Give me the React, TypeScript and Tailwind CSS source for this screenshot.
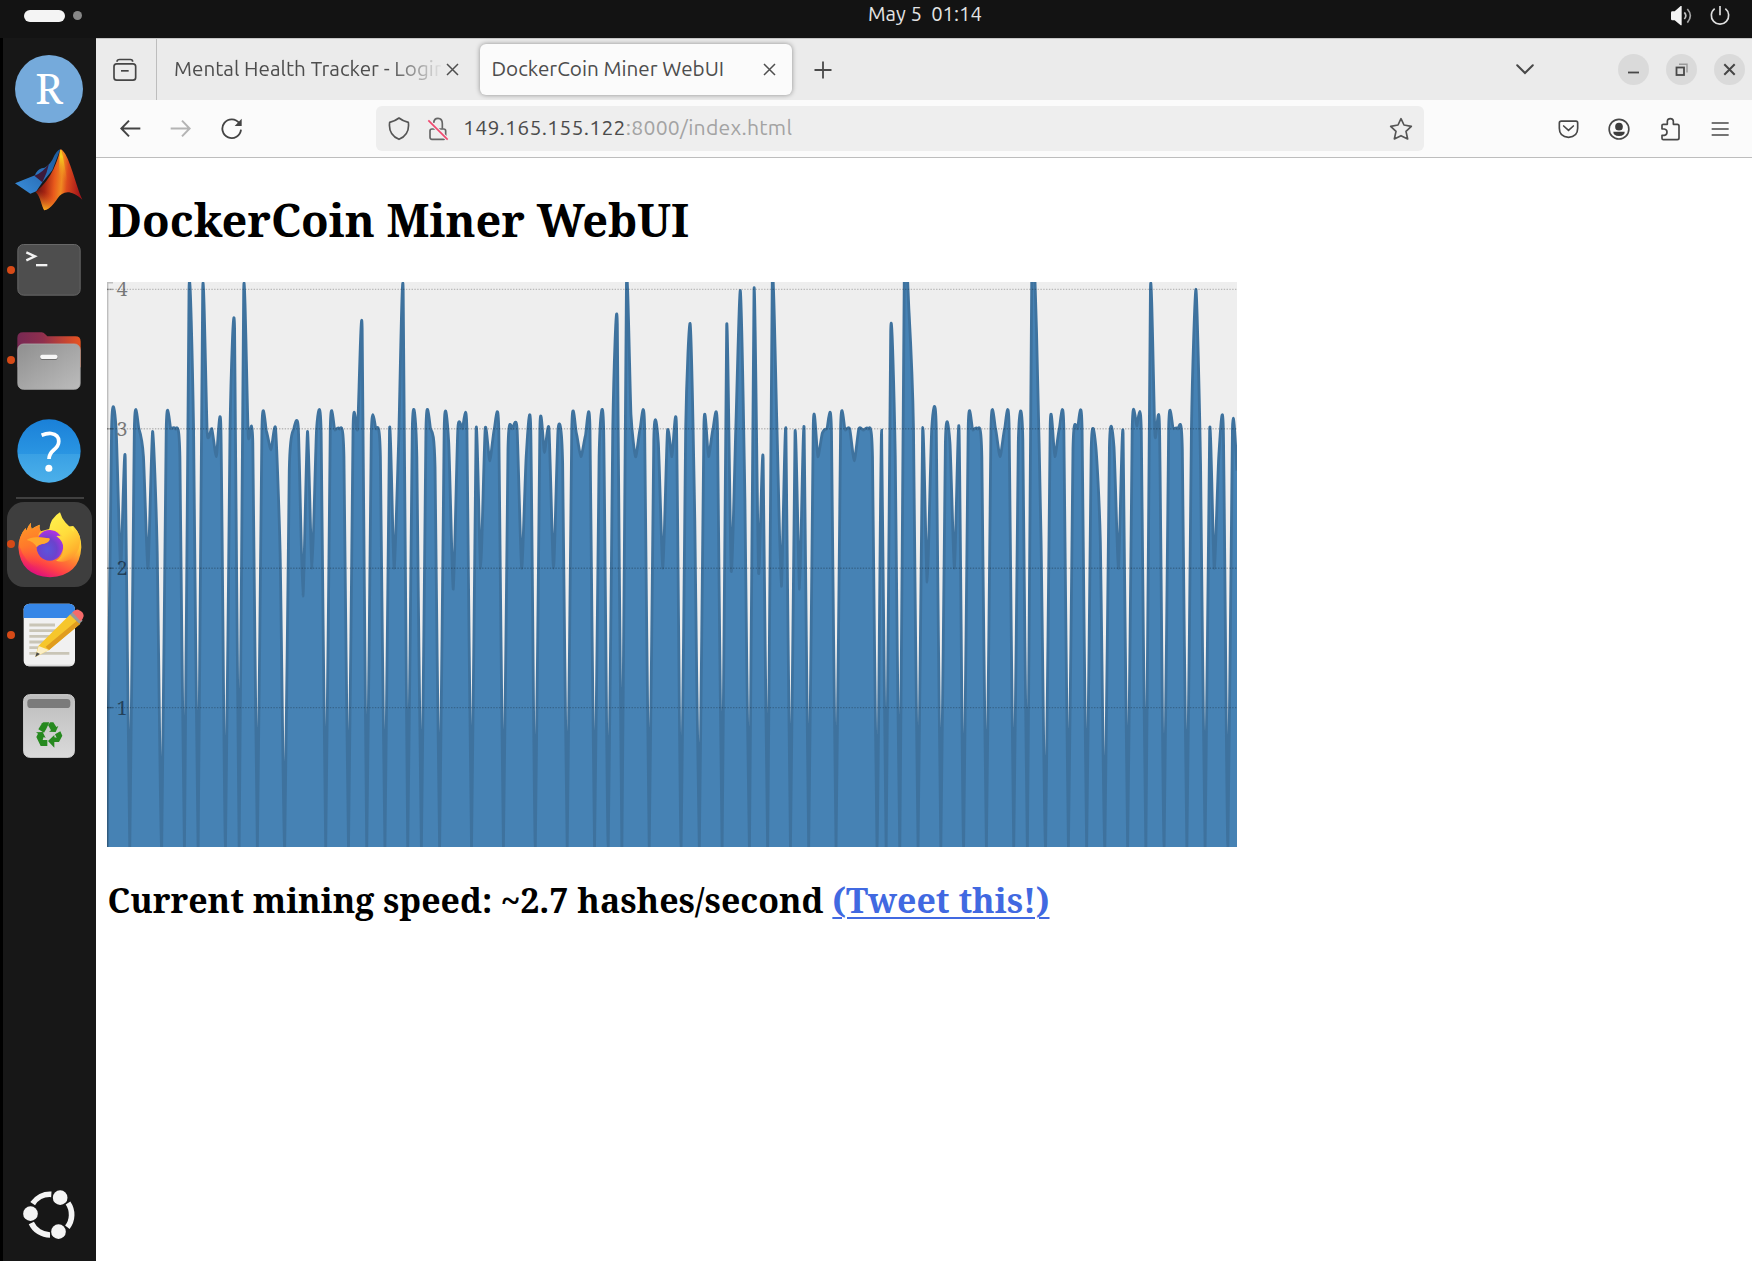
import React from "react";

const SAMPLES: number[] = [
  0, 3, 3, 2, 2.79, 0, 3, 3, 2.8, 2, 2.98, 2.15, 0, 3, 3, 3, 2.8, 0, 4, 3, 0, 4, 2.97, 3, 2.8, 3, 0, 3, 3.72, 0,
  4, 2.95, 2.9, 0, 3, 2.98, 2.85, 3, 2.1, 0, 2.7, 3, 3, 1.8, 2.98, 2, 3, 2.97, 0, 3, 2.99, 3, 2.8, 0, 3, 3,
  3.72, 0, 2.95, 3, 2.8, 0, 2.99, 2, 2.9, 4, 0, 3, 2.8, 0, 3, 3, 2.72, 0, 3, 2.9, 1.85, 3, 3, 2.98, 0, 2.99, 2, 3,
  2.77, 3, 2.98, 0, 2.85, 3, 3, 2, 2.8, 3, 0, 3, 2.83, 3, 2, 3, 2.75, 0, 3, 2.97, 2.8, 2.95, 3, 0, 2.8, 3, 0, 3,
  3.75, 0, 4.03, 3.1, 2.8, 3, 3, 0, 2.92, 2.9, 2, 2.98, 2.8, 3, 0, 3, 3.75, 2.35, 0, 3.02, 2.8, 3, 2.98, 0, 3.74,
  1.98, 3, 3.99, 2.5, 0, 4, 1.97, 2.79, 0, 4.05, 3.05, 1.87, 2.99, 0, 2.97, 1.85, 3, 0, 3.02, 2.8, 2.97, 3,
  2.98, 0, 3, 2.99, 3, 2.77, 3, 2.99, 3, 2.8, 0, 2.99, 0, 3.7, 2.8, 0, 4.2, 3.85, 3, 0, 2.99, 1.9, 3, 3, 0, 2.9,
  2.9, 2, 3, 0, 3, 2.99, 3, 2.8, 0, 3, 3, 2.8, 3, 3, 0, 2.9, 2.92, 0, 4.3, 3.7, 2.2, 0, 3.02, 2.8, 3, 3, 0,
  2.85, 3, 3, 0, 2.85, 2.88, 2.2, 0, 2.87, 2.87, 2, 2.97, 0, 3, 3.02, 2.98, 0, 4, 2.95, 3, 0, 3, 3, 3, 2.85, 0, 3,
  4, 2.75, 0, 2.99, 2, 2.8, 3, 0, 3, 2.7,
];

const CHART_W = 1130;
const CHART_H = 565;
const UNIT = 139.4;

function cardinalPath(values: number[]): string {
  const pts = values.map((v, i) => [(i * CHART_W) / (values.length - 1), CHART_H - v * UNIT]);
  const k = 0.1;
  let d = `M${pts[0][0]},${pts[0][1]}`;
  const tangent = (i: number) => {
    const a = pts[Math.max(i - 1, 0)];
    const b = pts[Math.min(i + 1, pts.length - 1)];
    return [(b[0] - a[0]) * k, (b[1] - a[1]) * k];
  };
  for (let i = 1; i < pts.length; i++) {
    const t0 = tangent(i - 1);
    const t1 = tangent(i);
    const p0 = pts[i - 1];
    const p1 = pts[i];
    d += `C${(p0[0] + t0[0]).toFixed(2)},${(p0[1] + t0[1]).toFixed(2)} ${(p1[0] - t1[0]).toFixed(2)},${(p1[1] - t1[1]).toFixed(2)} ${p1[0].toFixed(2)},${p1[1].toFixed(2)}`;
  }
  return d;
}

function Chart() {
  const line = cardinalPath(SAMPLES);
  return (
    <svg width={CHART_W} height={CHART_H} viewBox={`0 0 ${CHART_W} ${CHART_H}`} className="block overflow-visible bg-[#eeeeee]">
      <defs>
        <clipPath id="plot">
          <rect width={CHART_W} height={CHART_H} />
        </clipPath>
      </defs>
      <g clipPath="url(#plot)">
        <path d={`${line}L${CHART_W},${CHART_H}L0,${CHART_H}Z`} fill="#4682b4" />
        <path d={line} fill="none" stroke="#3e729e" strokeWidth="2.8" />
      </g>
      <path d="M6,0.7H0.7V565" fill="none" stroke="#000" strokeOpacity="0.2" strokeWidth="1.4" />
      {[1, 2, 3, 4].map((n) => {
        const y = CHART_H - n * UNIT;
        return (
          <g key={n}>
            <line x1="0" x2={CHART_W} y1={y} y2={y} stroke="#000" strokeOpacity="0.22" strokeWidth="1.4" strokeDasharray="1.41 1.41" />
            <line x1="0" x2="6" y1={y} y2={y} stroke="#000" strokeOpacity="0.25" strokeWidth="1.4" />
            <text x="9.5" y={y + 7} fontSize="19.8" fill="#000" fillOpacity="0.5" className="font-['Noto_Serif','DejaVu_Serif',serif] font-normal">
              {n}
            </text>
          </g>
        );
      })}
    </svg>
  );
}

function Slot({ running, active, children }: { running?: boolean; active?: boolean; children: React.ReactNode }) {
  return (
    <div className="relative flex h-[90.5px] w-[92px] shrink-0 items-center justify-center">
      <div className={active ? "ml-px flex size-[85px] items-center justify-center rounded-[17px] bg-[#3e3e3e]" : "flex items-center justify-center"}>
        {children}
      </div>
      {running && <span className="absolute left-[4px] top-[40.5px] size-[8px] rounded-full bg-[#d64a17]" />}
    </div>
  );
}

function RIcon() {
  return (
    <div className="flex size-[68px] items-center justify-center rounded-full bg-[#75aadb]">
      <span className="-mt-[3px] font-['Noto_Serif','DejaVu_Serif_Condensed','DejaVu_Serif',serif] text-[42px] leading-none text-white">R</span>
    </div>
  );
}

function MatlabIcon() {
  return (
    <svg width="68" height="62" viewBox="48 446 204 186">
      <defs>
        <linearGradient id="mb" x1="0" x2="1" y1="1" y2="0">
          <stop offset="0" stopColor="#3a8fdc" />
          <stop offset="0.5" stopColor="#2a6fb8" />
          <stop offset="1" stopColor="#1c5a9c" />
        </linearGradient>
        <linearGradient id="mr" x1="0" x2="1" y1="0" y2="0.1">
          <stop offset="0" stopColor="#4a0d12" />
          <stop offset="0.25" stopColor="#a32312" />
          <stop offset="0.45" stopColor="#e8591c" />
          <stop offset="0.6" stopColor="#f08a22" />
          <stop offset="0.72" stopColor="#dd4a1c" />
          <stop offset="1" stopColor="#a3161a" />
        </linearGradient>
        <linearGradient id="my" x1="0" x2="0" y1="0" y2="1">
          <stop offset="0" stopColor="#f5b921" />
          <stop offset="0.2" stopColor="#f6d11d" />
          <stop offset="1" stopColor="#f07a1e" stopOpacity="0" />
        </linearGradient>
        <linearGradient id="mo" x1="0.3" x2="0" y1="0" y2="1">
          <stop offset="0.35" stopColor="#e65a1e" stopOpacity="0" />
          <stop offset="0.9" stopColor="#f8b421" />
        </linearGradient>
      </defs>
      <path d="M48 549 L108 525 Q114 508 128 504 Q146 502 160 478 Q172 450 184 447 L160 510 L130 546 L112 573 L94 580 Z" fill="url(#mb)" />
      <path d="M106 526 Q130 518 150 490 Q144 520 130 546 Z" fill="#3c1a3a" />
      <path d="M184 447 C176 480 160 535 110 575 C124 586 128 620 136 630 C150 628 164 612 176 594 C190 573 214 565 250 598 C232 560 212 470 192 452 Q188 446 184 447 Z" fill="url(#mr)" />
      <path d="M110 575 C124 586 128 620 136 630 C150 628 164 612 176 594 L186 540 Z" fill="url(#mo)" />
      <path d="M183 449 Q178 500 184 545 Q194 545 204 540 Q196 490 188 450 Z" fill="url(#my)" />
    </svg>
  );
}

function TerminalIcon() {
  return (
    <svg width="64" height="52" viewBox="54 132 190 156">
      <rect x="55.5" y="133.5" width="187" height="152" rx="17" fill="#4e4e4e" stroke="#686868" strokeWidth="3" />
      <path d="M81 157 L107 169 L81 181" fill="none" stroke="#f2f2f2" strokeWidth="7" />
      <path d="M110 195.500H144" stroke="#f2f2f2" strokeWidth="7" />
    </svg>
  );
}

function FilesIcon() {
  return (
    <svg width="64" height="58" viewBox="54 394 190 174">
      <defs>
        <linearGradient id="fb" x1="0" x2="1" y1="0" y2="0">
          <stop offset="0" stopColor="#772953" />
          <stop offset="0.4" stopColor="#8f2f4e" />
          <stop offset="1" stopColor="#e95420" />
        </linearGradient>
        <linearGradient id="ff" x1="0" x2="1" y1="0" y2="1">
          <stop offset="0" stopColor="#8f8f8f" />
          <stop offset="1" stopColor="#bcbcbc" />
        </linearGradient>
      </defs>
      <path d="M54 412 Q54 395 71 395 H127 Q133 395 137 400 L144 407 H228 Q244 407 244 423 V500 H54 Z" fill="url(#fb)" />
      <rect x="55.500" y="430" width="187" height="136" rx="17" fill="url(#ff)" stroke="#ababab" strokeWidth="2.500" />
      <rect x="123" y="465" width="51" height="13" rx="5" fill="#6f6f6f" />
      <rect x="123" y="462" width="51" height="13" rx="5" fill="#f7f7f7" />
    </svg>
  );
}

function HelpIcon() {
  return (
    <svg width="64" height="64" viewBox="54 656 190 190">
      <defs>
        <clipPath id="hc">
          <circle cx="149" cy="751" r="94" />
        </clipPath>
        <linearGradient id="hg" x1="0" x2="0" y1="0" y2="1">
          <stop offset="0" stopColor="#1a80d8" />
          <stop offset="0.54" stopColor="#2a95e2" />
          <stop offset="0.54" stopColor="#39a0e4" />
          <stop offset="1" stopColor="#4cb0ea" />
        </linearGradient>
      </defs>
      <rect x="54" y="656" width="190" height="190" fill="url(#hg)" clipPath="url(#hc)" />
      <path d="M127 704 Q142 698 155 699 Q178 702 178 722 Q178 736 163 748 Q149 760 149 775" fill="none" stroke="#fff" strokeWidth="11" />
      <circle cx="148.500" cy="802" r="10.500" fill="#fff" />
    </svg>
  );
}

function FirefoxIcon() {
  return (
    <svg width="64" height="66" viewBox="23 32 192 198">
      <defs>
        <linearGradient id="fx" x1="0.8" x2="0.35" y1="0.1" y2="0.98">
          <stop offset="0" stopColor="#ffe844" />
          <stop offset="0.3" stopColor="#ffc030" />
          <stop offset="0.55" stopColor="#ff7b32" />
          <stop offset="0.78" stopColor="#ff4245" />
          <stop offset="1" stopColor="#e0107c" />
        </linearGradient>
        <radialGradient id="fp" cx="0.42" cy="0.65" r="0.62">
          <stop offset="0" stopColor="#5a55dc" />
          <stop offset="0.55" stopColor="#6c42cc" />
          <stop offset="1" stopColor="#a834e0" />
        </radialGradient>
        <linearGradient id="fy" x1="0.3" x2="0.75" y1="0" y2="1">
          <stop offset="0" stopColor="#fff04c" />
          <stop offset="0.45" stopColor="#ffdc3c" />
          <stop offset="0.8" stopColor="#ffb52e" />
          <stop offset="1" stopColor="#ff8a30" stopOpacity="0.2" />
        </linearGradient>
        <linearGradient id="fo" x1="0" x2="0.3" y1="0" y2="1">
          <stop offset="0" stopColor="#ff9a26" />
          <stop offset="0.5" stopColor="#ff7a2a" />
          <stop offset="1" stopColor="#ff4a40" stopOpacity="0" />
        </linearGradient>
      </defs>
      <path d="M62 64 Q60 74 64 83 Q74 76 88 70 Q85 82 91 90 L119 82 L188 74 Q214 100 213 138 Q208 224 119 228 Q30 224 24 138 Q24 106 46 80 L48 88 Q52 74 62 64 Z" fill="url(#fx)" />
      <ellipse cx="118" cy="132" rx="41" ry="46" fill="url(#fp)" />
      <path d="M149 33 Q120 50 116 86 Q132 85 142 91 Q151 96 157 106 Q146 102 138 104 Q160 120 159 142 Q157 166 137 178 Q164 188 188 168 Q212 146 209 108 Q203 88 188 74 L190 92 Q180 76 166 64 Q154 52 149 33 Z" fill="url(#fy)" />
      <path d="M62 64 Q60 74 64 83 Q74 76 88 70 Q85 82 91 90 Q82 98 85 108 L118 111 Q116 122 102 127 Q84 130 79 136 Q78 158 94 172 Q118 186 146 174 Q120 212 80 200 Q42 182 26 130 Q28 100 46 80 L48 88 Q52 74 62 64 Z" fill="url(#fo)" />
      <path d="M49 116 Q62 106 85 108 L115 111 Q121 113 116 119 Q110 127 94 128 Q84 130 79 138 Q70 120 49 116 Z" fill="#ffa92e" />
    </svg>
  );
}

function EditorIcon() {
  return (
    <svg width="61" height="64" viewBox="70 341 183 192" className="ml-[9px]">
      <defs>
        <clipPath id="ec">
          <rect x="72" y="343" width="154" height="188" rx="17" />
        </clipPath>
      </defs>
      <g clipPath="url(#ec)">
        <rect x="70" y="341" width="160" height="192" fill="#f1f1f1" />
        <rect x="70" y="341" width="160" height="45" fill="#3686e6" />
        <rect x="70" y="526" width="160" height="8" fill="#d9d9d9" />
      </g>
      <path d="M89 407H166M89 424H166M89 441H150M89 458H140M89 475H125M89 492H209" stroke="#c9c5b6" strokeWidth="8.500" />
      <path d="M107 503 L116 470 L212 375 L242 403 L148 482 Z" fill="#f6c62c" />
      <path d="M148 482 L138 472 L232 394 L242 403 Z" fill="#e09c1e" />
      <path d="M107 503 L117 470 L148 482 Z" fill="#fbeec4" />
      <path d="M107 503 L111 489 L121 494 Z" fill="#4a4a4a" />
      <path d="M211 376 L220 367 L249 394 L239 403 Z" fill="#9a9a9a" />
      <path d="M218 369 Q228 358 236 361 Q252 367 252 380 Q250 390 243 396 Z" fill="#f66a6a" />
    </svg>
  );
}

function TrashIcon() {
  return (
    <svg width="52" height="64" viewBox="71 612 156 192">
      <defs>
        <linearGradient id="tg" x1="0" x2="0" y1="0" y2="1">
          <stop offset="0" stopColor="#bcbcbc" />
          <stop offset="1" stopColor="#dadada" />
        </linearGradient>
      </defs>
      <rect x="73" y="614" width="152" height="188" rx="18" fill="url(#tg)" stroke="#d8d8d8" strokeWidth="3" />
      <rect x="84" y="627" width="129" height="27" rx="10" fill="#7b7b7b" />
      <g fill="#26891f">
        <path d="M132 697 H150 L141 716 L134 728 L117 718 L128 700 Z" />
        <path d="M153 697 H162 L171 711 L177 708 L169 726 L149 725 L155 721 L146 705 Z" />
        <path d="M167 733 L183 724 L189 737 L179 756 H165 V773 L146 753 L165 735 V742 L172 743 Z" />
        <path d="M110 727 L130 726 L139 744 L133 741 L130 750 H144 V768 H124 L111 741 L116 731 Z" />
      </g>
    </svg>
  );
}

function UbuntuLogo() {
  return (
    <svg width="52" height="52" viewBox="70 85 156 156">
      <g fill="none" stroke="#f4f4f4" strokeWidth="17">
        <path d="M99 129 A62 62 0 0 1 155 101" />
        <path d="M205 127 A62 62 0 0 1 203 200" />
        <path d="M151 223 A62 62 0 0 1 95 187" />
      </g>
      <g fill="#f4f4f4">
        <circle cx="181.500" cy="111" r="22" />
        <circle cx="92.500" cy="159" r="22" />
        <circle cx="176.500" cy="213" r="22" />
      </g>
    </svg>
  );
}

function Dock() {
  return (
    <aside className="flex w-[96px] shrink-0 flex-col border-l-[3px] border-black bg-[#171717] pt-[6px]">
      <Slot><RIcon /></Slot>
      <Slot><MatlabIcon /></Slot>
      <Slot running><TerminalIcon /></Slot>
      <Slot running><FilesIcon /></Slot>
      <Slot><HelpIcon /></Slot>
      <div className="flex h-[3px] items-center justify-center">
        <div className="h-[1.5px] w-[68px] bg-[#404040]" />
      </div>
      <Slot running active><FirefoxIcon /></Slot>
      <Slot running><EditorIcon /></Slot>
      <Slot><TrashIcon /></Slot>
      <div className="mb-[20px] mt-auto flex w-[92px] justify-center"><UbuntuLogo /></div>
    </aside>
  );
}

function TopBar() {
  return (
    <header className="flex h-[38px] shrink-0 items-start bg-[#131313]">
      <div className="flex h-[31px] w-[868px] items-center gap-[8px] pl-[24px]">
        <div className="h-[12px] w-[41px] rounded-full bg-[#f4f4f4]" />
        <div className="size-[9px] rounded-full bg-[#878787]" />
      </div>
      <div className="h-[30px] whitespace-pre font-['Ubuntu','Noto_Sans',sans-serif] text-[20.300px] leading-[28px] text-[#e4e4e4]">May 5  01:14</div>
      <div className="ml-auto flex h-[31px] items-center gap-[18px] pr-[22px]">
        <svg width="21" height="21" viewBox="961 15 63 63" fill="none">
          <path d="M961 38 Q961 34 965 34 H972 L990 18 H993 V76 H990 L972 61 H965 Q961 61 961 57 Z" fill="#f4f4f4" />
          <path d="M1001 37 Q1010 47 1001 57" stroke="#c4c4c4" strokeWidth="5" />
          <path d="M1010 27 Q1028 47 1010 68" stroke="#a4a4a4" strokeWidth="5" />
        </svg>
        <svg width="20" height="21" viewBox="1079 14 60 63" fill="none" stroke="#dedede" strokeWidth="5">
          <path d="M1109 17V45" />
          <path d="M1093 25 A26 26 0 1 0 1125 25" />
        </svg>
      </div>
    </header>
  );
}

function CloseX() {
  return (
    <svg width="13" height="13" viewBox="0 0 13 13" fill="none" stroke="#4f4f4f" strokeWidth="1.500" className="shrink-0">
      <path d="M1 1L12 12M12 1L1 12" />
    </svg>
  );
}

function TabStrip() {
  return (
    <div className="flex h-[62px] shrink-0 items-center border-t border-[#c6c6c6] bg-[#ebebeb] font-['Ubuntu','Noto_Sans',sans-serif] text-[20.700px] text-[#4d4d4d]">
      <div className="flex h-full w-[61px] items-center border-r-[1.5px] border-[#bdbdbd] pl-[17px]">
        <svg width="24" height="24" viewBox="338 173 72 72" fill="none" stroke="#454545" strokeWidth="5">
          <rect x="341" y="190.500" width="65" height="49" rx="8" />
          <path d="M350 184 Q350 177.500 358 177.500 H390 Q397 177.500 397 184" />
          <path d="M362 211.500H385" />
        </svg>
      </div>
      <div className="flex w-[303px] items-center pl-[17px]">
        <div className="-mt-px w-[267px] overflow-hidden whitespace-nowrap [mask-image:linear-gradient(to_right,black_215px,transparent_270px)]">
          Mental Health Tracker - Login
        </div>
        <span className="ml-[4.500px]"><CloseX /></span>
      </div>
      <div className="ml-[20px] flex h-[51px] w-[312px] items-center justify-between rounded-[6px] bg-[#fbfbfb] pl-[11.500px] pr-[16px] shadow-[0_0_5px_rgba(0,0,0,0.4)]">
        <span className="-mt-px whitespace-nowrap">DockerCoin Miner WebUI</span>
        <CloseX />
      </div>
      <svg width="18" height="18" viewBox="0 0 18 18" className="ml-[22px] mt-px" stroke="#4a4a4a" strokeWidth="1.800">
        <path d="M9 0.500V17.500M0.500 9H17.500" />
      </svg>
      <div className="ml-auto flex items-center pr-[7px]">
        <svg width="18" height="11" viewBox="0 0 18 11" fill="none" stroke="#484848" strokeWidth="2" strokeLinecap="round" className="mr-[84px]">
          <path d="M1.200 1.200L9 9L16.800 1.200" />
        </svg>
        <div className="flex gap-[17px]">
          <span className="flex size-[31px] items-center justify-center rounded-full bg-[#dadada]">
            <svg width="13" height="13" viewBox="0 0 13 13" stroke="#484848" strokeWidth="1.800"><path d="M1 9.500H12" /></svg>
          </span>
          <span className="flex size-[31px] items-center justify-center rounded-full bg-[#dadada]">
            <svg width="13" height="13" viewBox="0 0 13 13" fill="none"><rect x="1.500" y="4.500" width="7.500" height="7.500" stroke="#484848" strokeWidth="1.800" /><path d="M4 1.200H12V9.500" stroke="#999" strokeWidth="1.400" /></svg>
          </span>
          <span className="flex size-[31px] items-center justify-center rounded-full bg-[#dadada]">
            <svg width="13" height="13" viewBox="0 0 13 13" stroke="#454545" strokeWidth="2"><path d="M1.300 1.300L11.700 11.700M11.700 1.300L1.300 11.700" /></svg>
          </span>
        </div>
      </div>
    </div>
  );
}

function Toolbar() {
  return (
    <div className="flex h-[58px] shrink-0 items-center border-b-[1.5px] border-[#bdbdbd] bg-[#fbfbfb] pl-[23.500px]">
      <svg width="21" height="19" viewBox="359 358 63 57" fill="none" stroke="#444" strokeWidth="6">
        <path d="M420 386.500H364M386 363L363 386.500L386 410" />
      </svg>
      <svg width="21" height="19" viewBox="511 358 63 57" fill="none" stroke="#b4b4b4" strokeWidth="6" className="ml-[29.500px]">
        <path d="M513 386.500H569M547 363L570 386.500L547 410" />
      </svg>
      <svg width="22" height="22" viewBox="664 353 66 66" fill="none" className="ml-[29.500px]">
        <path d="M719 369 A28 28 0 1 0 724 388" stroke="#444" strokeWidth="5.500" />
        <path d="M726 355V377H705Z" fill="#444" />
      </svg>
      <div className="ml-[133.500px] flex h-[45px] w-[1047.500px] items-center rounded-[6px] bg-[#eeeeee] pl-[11.500px] pr-[10.500px]">
        <svg width="22" height="24" viewBox="1162 350 66 72" fill="none" stroke="#555" strokeWidth="5">
          <path d="M1195 353 Q1206 362 1223 366 Q1228 403 1195 417 Q1162 403 1167 366 Q1184 362 1195 353 Z" strokeLinejoin="round" />
        </svg>
        <svg width="22" height="24" viewBox="1281 350 66 72" fill="none" className="ml-[17.500px]">
          <rect x="1290" y="386" width="47" height="31" rx="6" stroke="#666" strokeWidth="5" />
          <path d="M1301 368 Q1302 354 1314 354 Q1327 354 1327 370 V385" stroke="#666" strokeWidth="5" />
          <path d="M1285 360L1343 418" stroke="#eeeeee" strokeWidth="11" />
          <path d="M1285 360L1343 418" stroke="#f0496f" strokeWidth="5" />
        </svg>
        <div className="-mt-px ml-[14px] whitespace-nowrap font-['Ubuntu','Noto_Sans',sans-serif] text-[21.200px] tracking-[0.25px] text-[#4b4b4b]">
          149.165.155.122<span className="text-[#a3a3a3]">:8000/index.html</span>
        </div>
        <svg width="24" height="24" viewBox="117 350 72 72" fill="none" stroke="#555" strokeWidth="5" strokeLinejoin="round" className="ml-auto">
          <path d="M153 355L162 374L184 378L168 393L173 416L153 406L133 416L138 393L122 378L144 374Z" />
        </svg>
      </div>
      <div className="ml-auto flex items-center gap-[27.500px] pr-[19px]">
        <svg width="23" height="24" viewBox="619 350 69 72" fill="none" stroke="#484848" strokeWidth="5">
          <path d="M632 362.500H676Q681 362.500 681 368V384Q681 410 653.500 411Q626 410 626 384V368Q626 362.500 632 362.500Z" />
          <path d="M639 377L653.500 390L668 377" strokeLinecap="round" />
        </svg>
        <svg width="24" height="24" viewBox="772 351 72 72" fill="none">
          <circle cx="808" cy="387.500" r="29.500" stroke="#484848" strokeWidth="5" />
          <circle cx="808" cy="380" r="11.500" fill="#3c3c3c" />
          <path d="M791 395H825Q826 407 808 408Q790 407 791 395Z" fill="#3c3c3c" />
        </svg>
        <svg width="24" height="24" viewBox="926 349 72 72" fill="none" stroke="#484848" strokeWidth="5" strokeLinejoin="round">
          <path d="M935 374Q935 371 939 371H951V361Q952 354 960 354Q968 354 969 361V371H981Q986 371 986 376V412Q986 417 981 417H939Q935 417 935 413V404H942Q950 403 950 394Q950 386 942 385H935Z" />
        </svg>
        <svg width="26" height="24" viewBox="1072 349 78 72" stroke="#484848" strokeWidth="5" className="-ml-[3px]">
          <path d="M1086 367H1137M1086 385H1137M1086 403H1137" />
        </svg>
      </div>
    </div>
  );
}

export default function App() {
  return (
    <div className="flex h-[1261px] w-[1752px] flex-col overflow-hidden bg-white">
      <TopBar />
      <div className="flex min-h-0 flex-1">
        <Dock />
        <div className="flex min-w-0 flex-1 flex-col">
          <TabStrip />
          <Toolbar />
          <main className="flex-1 pl-[11.500px] font-['Noto_Serif','DejaVu_Serif_Condensed','DejaVu_Serif',serif] font-bold text-black">
            <h1 className="mt-[31px] h-[93px] whitespace-nowrap text-[45.150px] leading-[62px]">
              DockerCoin Miner WebUI
            </h1>
            <div className="-ml-[0.500px]">
              <Chart />
            </div>
            <h2 className="mt-[29px] whitespace-nowrap text-[33.900px] leading-[48px]">
              Current mining speed: ~2.7 hashes/second{" "}
              <a className="text-[#4169e1] underline decoration-[1.5px] underline-offset-[4px]">(Tweet this!)</a>
            </h2>
          </main>
        </div>
      </div>
    </div>
  );
}
